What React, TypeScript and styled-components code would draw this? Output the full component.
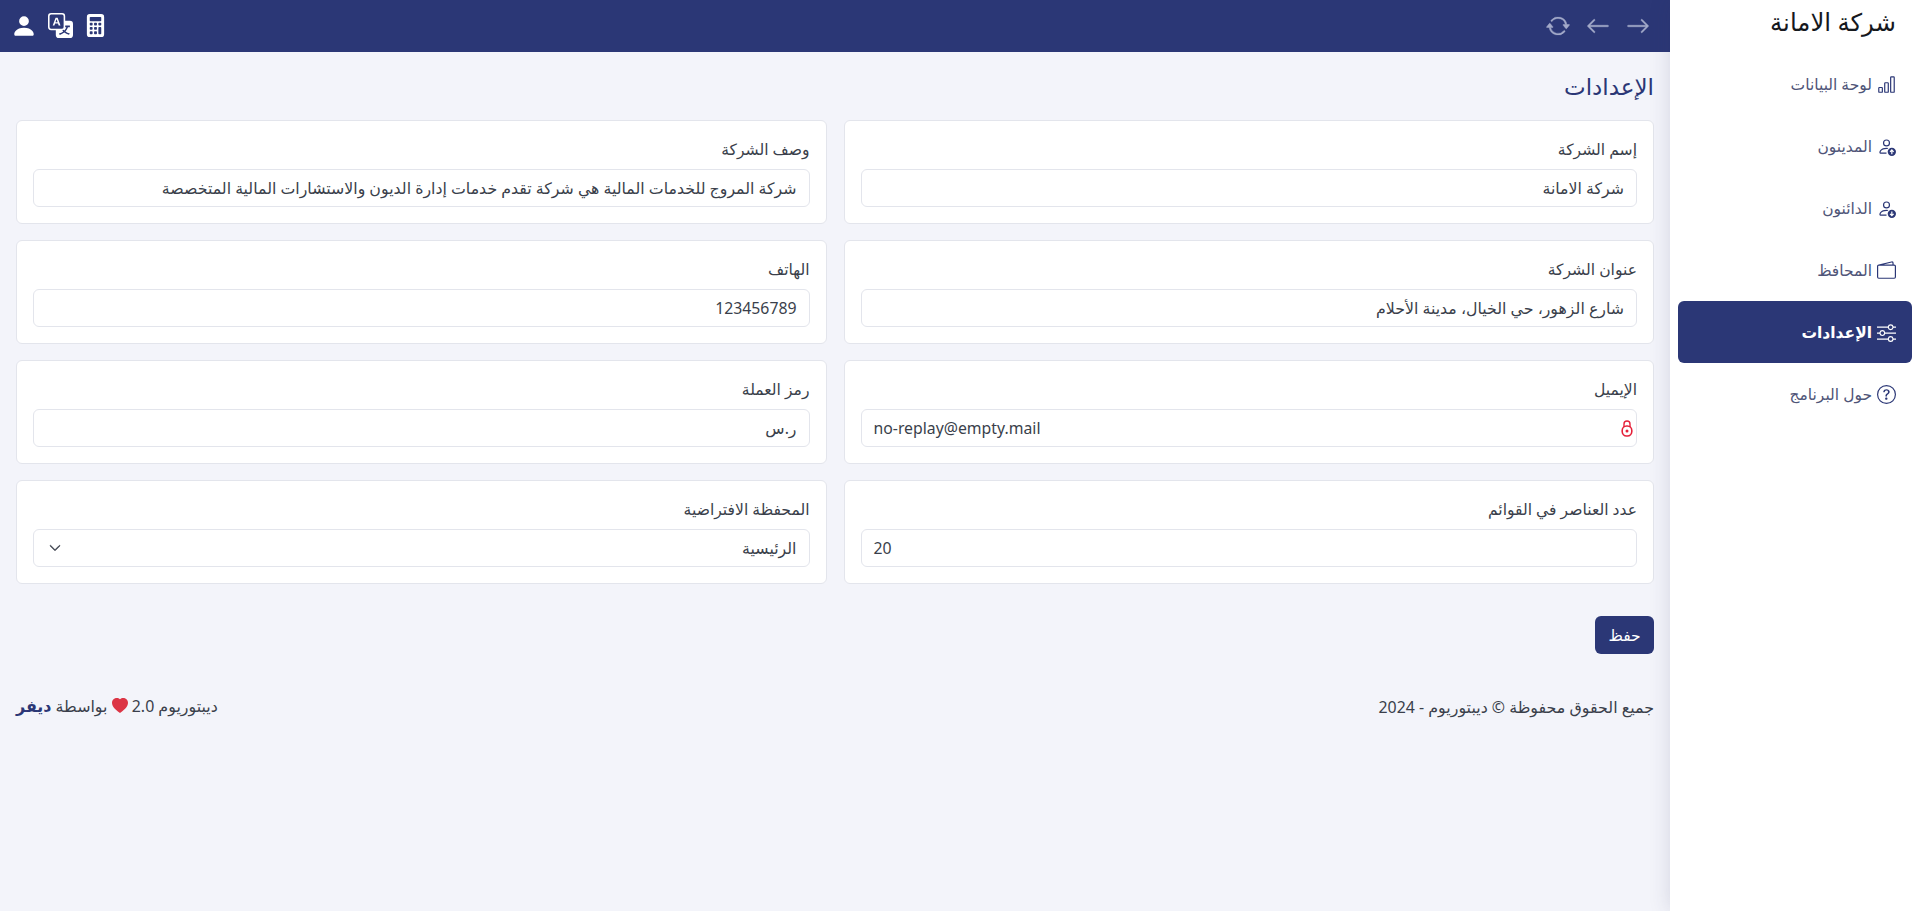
import React from 'react';
import styled, { createGlobalStyle } from 'styled-components';
import {
  BsArrowLeft,
  BsArrowRepeat,
  BsArrowRight,
  BsBarChart,
  BsCalculatorFill,
  BsChevronDown,
  BsHeartFill,
  BsPersonFill,
  BsQuestionCircle,
  BsSliders,
  BsTranslate,
  BsWallet2,
} from 'react-icons/bs';

// person outline with a filled badge, the arrow flips for up/down
const PersonBadge: React.FC<{ down?: boolean }> = ({ down }) => (
  <svg width="19" height="19" viewBox="0 0 16 16" fill="currentColor">
    <path d="M8 8a3 3 0 1 0 0-6 3 3 0 0 0 0 6m0-1a2 2 0 1 1 0-4 2 2 0 0 1 0 4" fillRule="evenodd" />
    <path d="M8 9c-5 0-6 3-6 4s1 1 1 1h5v-1H3c0-.25.15-1 .83-1.67C4.48 10.68 5.7 10 8 10c.3 0 .55.01.8.03l.75-.85Q8.85 9 8 9" />
    <circle cx="12.5" cy="12.5" r="3.5" />
    <path
      d={down ? 'M12.5 10.5v3.2M11 12.5l1.5 1.6 1.5-1.6' : 'M12.5 14.5v-3.2M11 12.5l1.5-1.6 1.5 1.6'}
      stroke="#fff"
      strokeWidth="1"
      fill="none"
    />
  </svg>
);

const LockIcon = () => (
  <svg width="12" height="18" viewBox="0 0 12 18" fill="none">
    <path d="M3 8V5a3 3 0 0 1 6 0v3" stroke="#e5213a" strokeWidth="1.4" />
    <rect x="1.2" y="7" width="9.6" height="10" rx="4.4" stroke="#e5213a" strokeWidth="1.6" />
    <circle cx="6" cy="12" r="1.5" fill="#e5213a" />
  </svg>
);

const navItems = [
  { label: 'لوحة البيانات', icon: <BsBarChart size={19} /> },
  { label: 'المدينون', icon: <PersonBadge /> },
  { label: 'الدائنون', icon: <PersonBadge down /> },
  { label: 'المحافظ', icon: <BsWallet2 size={19} /> },
  { label: 'الإعدادات', icon: <BsSliders size={19} />, active: true },
  { label: 'حول البرنامج', icon: <BsQuestionCircle size={19} /> },
];

const App: React.FC = () => {
  return (
    <AppWrap dir="rtl">
      <GlobalStyle />
      <SideBar>
        <Brand>شركة الامانة</Brand>
        <Nav>
          {navItems.map((item) => (
            <NavItem key={item.label} $active={item.active}>
              {item.icon}
              <span>{item.label}</span>
            </NavItem>
          ))}
        </Nav>
      </SideBar>
      <FillBox>
        <TopBar>
          <IconGroup $dim>
            <BsArrowRight size={24} />
            <BsArrowLeft size={24} />
            <BsArrowRepeat size={24} />
          </IconGroup>
          <IconGroup $tight>
            <BsCalculatorFill size={23} />
            <BsTranslate size={25} />
            <BsPersonFill size={26} />
          </IconGroup>
        </TopBar>
        <Content>
          <PageTitle>الإعدادات</PageTitle>
          <CardGrid>
            <Card>
              <FieldLabel>إسم الشركة</FieldLabel>
              <FieldBox>شركة الامانة</FieldBox>
            </Card>
            <Card>
              <FieldLabel>وصف الشركة</FieldLabel>
              <FieldBox>شركة المروج للخدمات المالية هي شركة تقدم خدمات إدارة الديون والاستشارات المالية المتخصصة</FieldBox>
            </Card>
            <Card>
              <FieldLabel>عنوان الشركة</FieldLabel>
              <FieldBox>شارع الزهور، حي الخيال، مدينة الأحلام</FieldBox>
            </Card>
            <Card>
              <FieldLabel>الهاتف</FieldLabel>
              <FieldBox>123456789</FieldBox>
            </Card>
            <Card>
              <FieldLabel>الإيميل</FieldLabel>
              <FieldBox $between>
                <LockWrap><LockIcon /></LockWrap>
                <span dir="ltr">no-replay@empty.mail</span>
              </FieldBox>
            </Card>
            <Card>
              <FieldLabel>رمز العملة</FieldLabel>
              <FieldBox>ر.س</FieldBox>
            </Card>
            <Card>
              <FieldLabel>عدد العناصر في القوائم</FieldLabel>
              <FieldBox $ltr>20</FieldBox>
            </Card>
            <Card>
              <FieldLabel>المحفظة الافتراضية</FieldLabel>
              <FieldBox $between>
                <span>الرئيسية</span>
                <Chevron><BsChevronDown size={12} /></Chevron>
              </FieldBox>
            </Card>
          </CardGrid>
          <SaveRow>
            <SaveButton>حفظ</SaveButton>
          </SaveRow>
          <Footer>
            <span>جميع الحقوق محفوظة © ديبتوريوم - 2024</span>
            <span>
              ديبتوريوم 2.0 <Heart><BsHeartFill size={16} /></Heart> بواسطة <FooterLink>ديفر</FooterLink>
            </span>
          </Footer>
        </Content>
      </FillBox>
    </AppWrap>
  );
};

export default App;

const GlobalStyle = createGlobalStyle`
  html, body, #root {
    margin: 0;
    height: 100%;
  }
  body {
    font-family: "Noto Sans", "DejaVu Sans", sans-serif;
    background-color: #f3f4fa;
    overflow: hidden;
  }
`;

const AppWrap = styled.div`
  display: flex;
  flex-direction: row;
  width: 100%;
  height: 911px;
  background-color: #f3f4fa;
`;

const SideBar = styled.aside`
  width: 250px;
  flex-shrink: 0;
  height: 100%;
  background-color: #fff;
  box-shadow: 0 0 20px rgba(50, 50, 93, 0.16);
  position: relative;
  z-index: 2;
`;

const Brand = styled.div`
  height: 42px;
  padding: 0 24px;
  display: flex;
  align-items: center;
  font-size: 24.4px;
  color: #16181d;
`;

const Nav = styled.nav`
  padding: 11px 8px 0;
  display: flex;
  flex-direction: column;
`;

const NavItem = styled.div<{ $active?: boolean }>`
  height: 62px;
  border-radius: 6px;
  display: flex;
  align-items: center;
  gap: 5px;
  padding-right: 16px;
  font-size: 15.5px;
  font-weight: ${(p) => (p.$active ? 700 : 400)};
  color: ${(p) => (p.$active ? '#fff' : '#4f5578')};
  background-color: ${(p) => (p.$active ? '#2b3776' : 'transparent')};
  svg {
    color: ${(p) => (p.$active ? '#fff' : '#2b3776')};
    flex-shrink: 0;
  }
`;

const FillBox = styled.div`
  flex: 1;
  min-width: 0;
  display: flex;
  flex-direction: column;
`;

const TopBar = styled.header`
  height: 52px;
  flex-shrink: 0;
  box-sizing: border-box;
  background-color: #2b3776;
  display: flex;
  align-items: center;
  justify-content: space-between;
  padding: 0 20px 1px 11px;
`;

const IconGroup = styled.div<{ $dim?: boolean; $tight?: boolean }>`
  display: flex;
  align-items: center;
  gap: ${(p) => (p.$tight ? '11px' : '16px')};
  color: ${(p) => (p.$dim ? '#a3aac9' : '#fff')};
  svg {
    stroke: currentColor;
    stroke-width: ${(p) => (p.$dim ? '0.3' : '0')};
  }
`;

const Content = styled.main`
  padding: 0 16px;
`;

const PageTitle = styled.h2`
  margin: 0 0 1px;
  height: 67px;
  display: flex;
  align-items: center;
  font-size: 23px;
  font-weight: 400;
  color: #2b3776;
`;

const CardGrid = styled.div`
  display: grid;
  grid-template-columns: 1fr 1fr;
  gap: 16px 17px;
`;

const Card = styled.section`
  height: 104px;
  box-sizing: border-box;
  background-color: #fff;
  border: 1px solid #e3e5ec;
  border-radius: 6px;
  padding: 16px;
`;

const FieldLabel = styled.div`
  height: 24px;
  margin-bottom: 8px;
  display: flex;
  align-items: center;
  font-size: 15.6px;
  color: #3a3f4b;
`;

const FieldBox = styled.div<{ $between?: boolean; $ltr?: boolean }>`
  height: 38px;
  box-sizing: border-box;
  border: 1px solid #e3e5ec;
  border-radius: 6px;
  padding: 0 12px;
  display: flex;
  align-items: center;
  font-size: 15.8px;
  color: #3a3f4b;
  justify-content: ${(p) => (p.$between ? 'space-between' : p.$ltr ? 'flex-end' : 'flex-start')};
  white-space: nowrap;
  overflow: hidden;
`;

const LockWrap = styled.span`
  display: flex;
  margin-right: -9px;
`;

const Chevron = styled.span`
  display: flex;
  margin-left: 3px;
  svg {
    stroke: currentColor;
    stroke-width: 1;
  }
`;

const SaveRow = styled.div`
  padding-top: 32px;
  display: flex;
`;

const SaveButton = styled.button`
  width: 59px;
  height: 38px;
  border: 0;
  border-radius: 6px;
  background-color: #2b3776;
  color: #fff;
  font-family: inherit;
  font-size: 15.5px;
`;

const Footer = styled.footer`
  margin-top: 41px;
  display: flex;
  justify-content: space-between;
  align-items: center;
  font-size: 15.9px;
  color: #3a3f4b;
`;

const Heart = styled.span`
  color: #dc3545;
  vertical-align: middle;
`;

const FooterLink = styled.b`
  color: #2b3776;
`;
